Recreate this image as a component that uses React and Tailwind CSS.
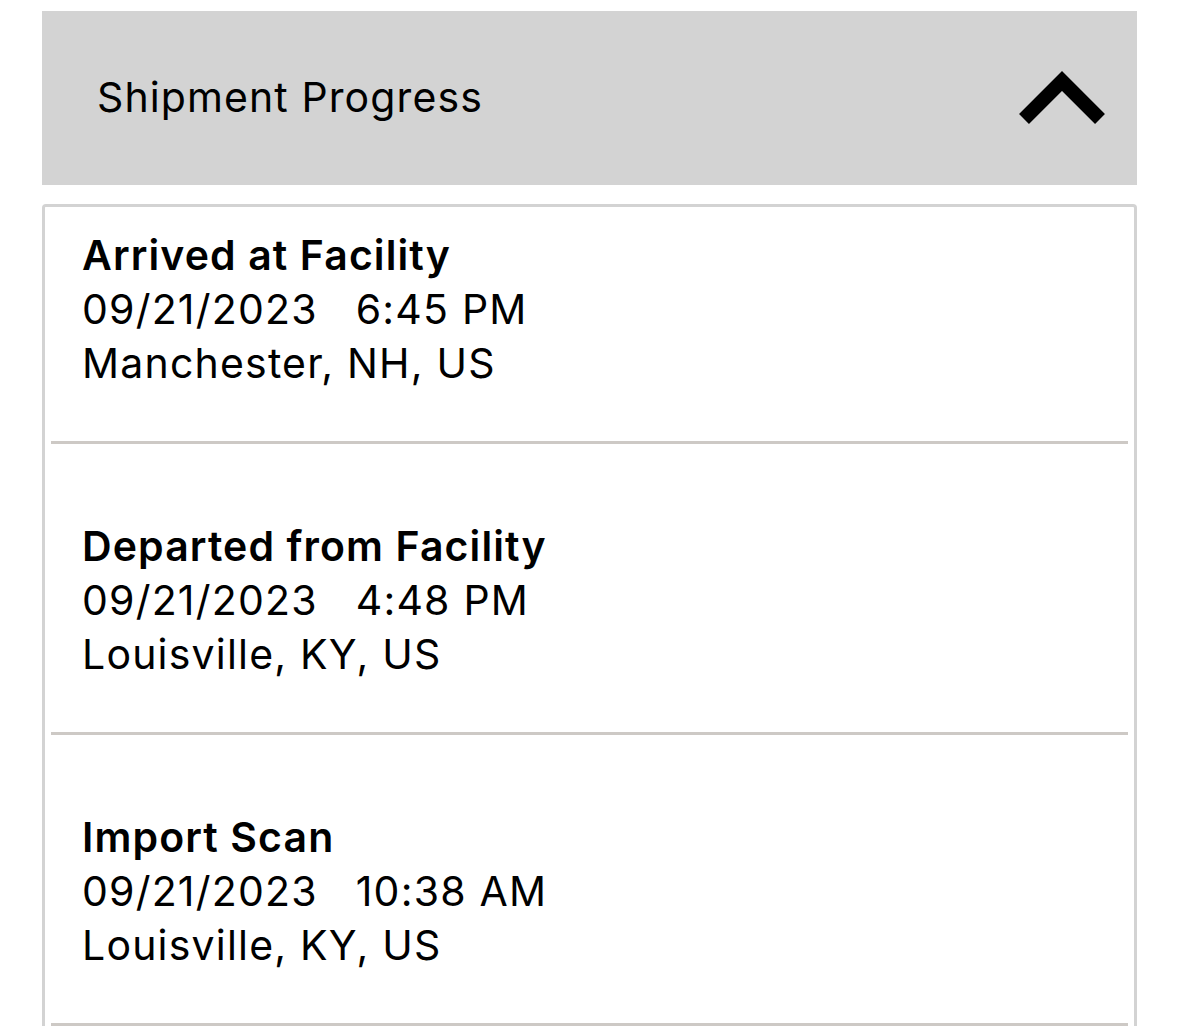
import React from 'react'

const events = [
  { title: 'Arrived at Facility', date: '09/21/2023', time: '6:45 PM', place: 'Manchester, NH, US' },
  { title: 'Departed from Facility', date: '09/21/2023', time: '4:48 PM', place: 'Louisville, KY, US' },
  { title: 'Import Scan', date: '09/21/2023', time: '10:38 AM', place: 'Louisville, KY, US' },
]

const ChevronUp = () => (
  <svg width="100" height="70" viewBox="0 0 100 70" className="block">
    <polyline points="12,56 50,18 88,56" fill="none" stroke="#000" strokeWidth="14" strokeLinecap="butt" strokeLinejoin="miter" />
  </svg>
)

const EventRow = ({ ev, first }) => (
  <div className={`mx-[6px] border-b-[3px] border-[#cdc9c5] px-[31px] pb-[51px] ${first ? 'pt-[21px]' : 'pt-[75px]'}`}>
    <p className="text-[41px] leading-[54px] font-semibold tracking-[1.1px] text-black">{ev.title}</p>
    <p className="text-[41px] leading-[54px] tracking-[1.2px] text-black">
      {ev.date}<span className="inline-block w-[38px]" />{ev.time}
    </p>
    <p className="text-[41px] leading-[54px] tracking-[1.2px] text-black">{ev.place}</p>
  </div>
)

export default function App() {
  return (
    <div className="min-h-screen bg-white pt-[11px] px-[42px] overflow-hidden" style={{ fontFamily: 'Inter, "Noto Sans", sans-serif' }}>
      <div className="h-[174px] bg-[#d3d3d3] flex items-center justify-between pl-[55px] pr-[25px]">
        <span className="text-[41px] tracking-[1.1px] text-black">Shipment Progress</span>
        <ChevronUp />
      </div>
      <div className="mt-[19px] border-[3px] border-b-0 border-[#d3d3d3] rounded-t-[4px] bg-white">
        {events.map((ev, i) => (
          <EventRow key={i} ev={ev} first={i === 0} />
        ))}
      </div>
    </div>
  )
}
